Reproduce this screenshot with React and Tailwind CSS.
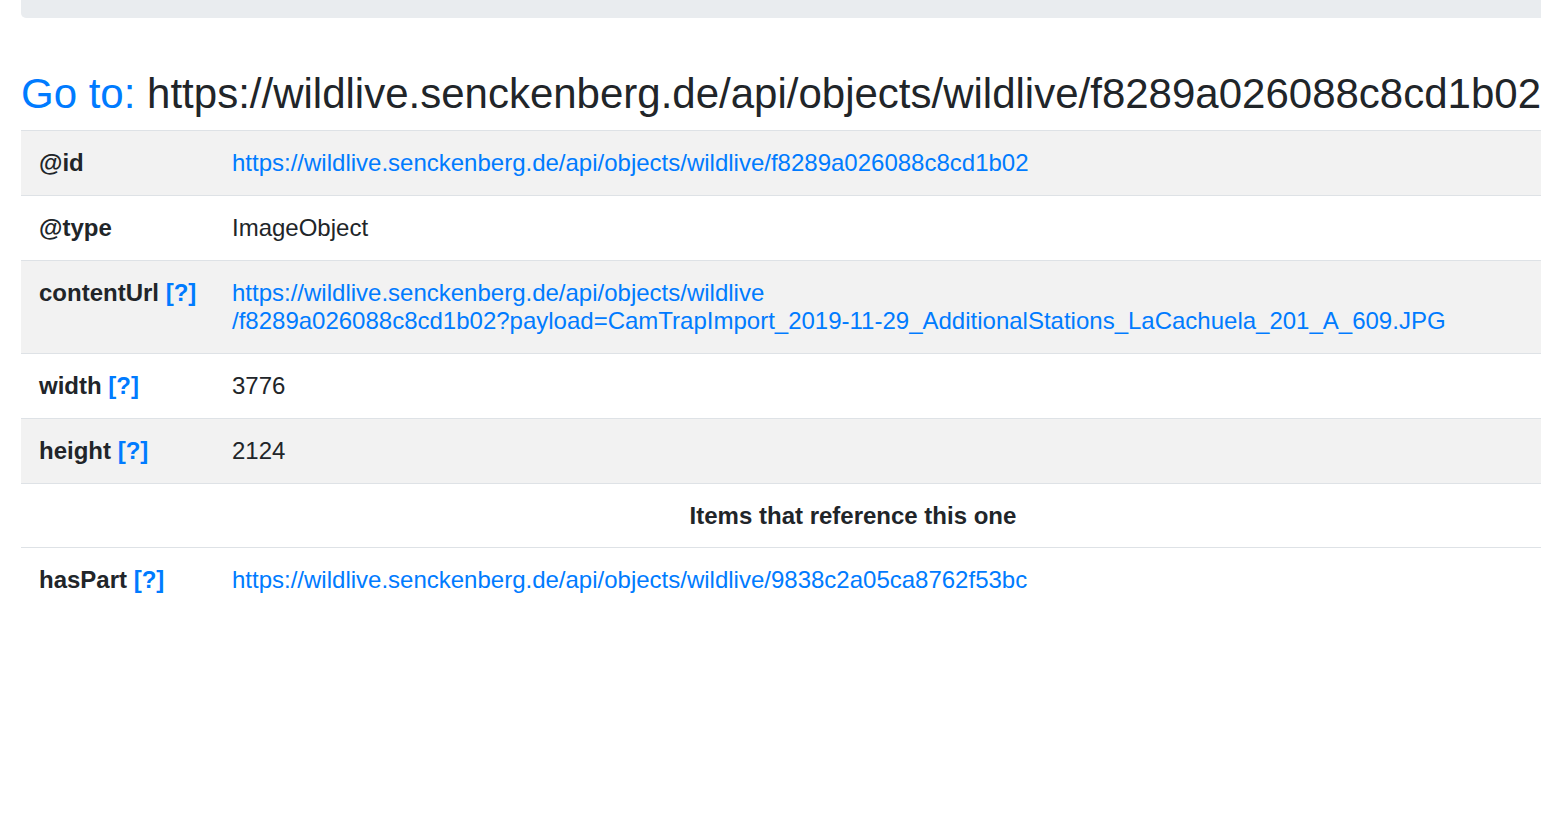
import React from "react";

const LINK = "text-[#007bff]";

function Help() {
  return <span className={LINK}>[?]</span>;
}

function Row({ label, children, striped, help }) {
  return (
    <div
      className={
        "grid grid-cols-[193px_1fr] border-t border-[#dee2e6] " +
        (striped ? "bg-[#f2f2f2]" : "bg-white")
      }
    >
      <div className="px-[18px] py-[18px] font-bold whitespace-nowrap">
        {label}
        {help ? <> <Help /></> : null}
      </div>
      <div className="px-[18px] py-[18px]">{children}</div>
    </div>
  );
}

export default function App() {
  return (
    <div
      className="w-full min-h-[824px] overflow-hidden bg-white text-[#212529]"
      style={{ fontFamily: '"Liberation Sans", Arial, sans-serif' }}
    >
      <div className="pl-[21px]">
        <div className="w-[1664px]">
          <div className="h-[18px] bg-[#e9ecef] rounded-b-[5px]" />
          <h1 className="mt-[51px] mb-[11px] text-[42px] leading-[50px] font-normal whitespace-nowrap">
            <span className={LINK}>Go to:</span>{" "}
            https://wildlive.senckenberg.de/api/objects/wildlive/f8289a026088c8cd1b02
          </h1>
          <div className="text-[24px] leading-[28px]">
            <Row label="@id" striped>
              <span className={LINK}>
                https://wildlive.senckenberg.de/api/objects/wildlive/f8289a026088c8cd1b02
              </span>
            </Row>
            <Row label="@type">ImageObject</Row>
            <Row label="contentUrl" help striped>
              <span className={LINK}>
                https://wildlive.senckenberg.de/api/objects/wildlive
                <br />
                /f8289a026088c8cd1b02?payload=CamTrapImport_2019-11-29_AdditionalStations_LaCachuela_201_A_609.JPG
              </span>
            </Row>
            <Row label="width" help>3776</Row>
            <Row label="height" help striped>2124</Row>
            <div className="border-t border-[#dee2e6] pt-[18px] pb-[17px] text-center font-bold">
              Items that reference this one
            </div>
            <Row label="hasPart" help>
              <span className={LINK}>
                https://wildlive.senckenberg.de/api/objects/wildlive/9838c2a05ca8762f53bc
              </span>
            </Row>
          </div>
        </div>
      </div>
    </div>
  );
}
